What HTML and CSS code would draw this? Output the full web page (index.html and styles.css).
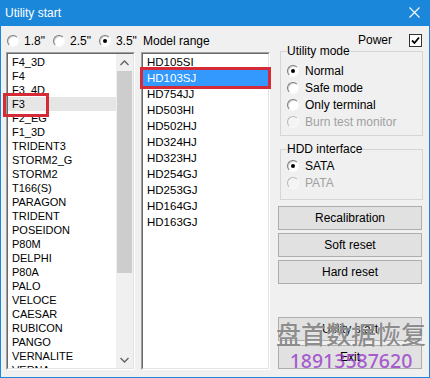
FILE: index.html
```html
<!DOCTYPE html>
<html lang="en">
<head>
    <meta charset="UTF-8">
    <title>Utility start</title>
    <link rel="stylesheet" href="styles.css">
</head>
<body>

<div class="window">
    <!-- title bar -->
    <div class="titlebar">
        <span class="title">Utility start</span>
        <svg class="close" width="11" height="11" viewBox="0 0 11 11">
            <path d="M0.5 0.5 L10.5 10.5 M10.5 0.5 L0.5 10.5" stroke="#fff" stroke-width="1.1" fill="none"/>
        </svg>
    </div>

    <div class="client">
        <!-- family list -->
        <div class="col col-family">
            <div class="sizes">
                <label class="opt"><span class="radio"></span>1.8"</label>
                <label class="opt"><span class="radio"></span>2.5"</label>
                <label class="opt"><span class="radio checked"></span>3.5"</label>
            </div>
            <div class="listbox">
                <div class="listbox-in family">
                    <div class="items">
                        <div class="item">F4_3D</div>
                        <div class="item">F4</div>
                        <div class="item">F3_4D</div>
                        <div class="item current">F3</div>
                        <div class="item">F2_EG</div>
                        <div class="item">F1_3D</div>
                        <div class="item">TRIDENT3</div>
                        <div class="item">STORM2_G</div>
                        <div class="item">STORM2</div>
                        <div class="item">T166(S)</div>
                        <div class="item">PARAGON</div>
                        <div class="item">TRIDENT</div>
                        <div class="item">POSEIDON</div>
                        <div class="item">P80M</div>
                        <div class="item">DELPHI</div>
                        <div class="item">P80A</div>
                        <div class="item">PALO</div>
                        <div class="item">VELOCE</div>
                        <div class="item">CAESAR</div>
                        <div class="item">RUBICON</div>
                        <div class="item">PANGO</div>
                        <div class="item">VERNALITE</div>
                        <div class="item">VERNA</div>
                    </div>
                    <div class="vscroll">
                        <div class="arrow">
                            <svg width="9" height="6" viewBox="0 0 9 6"><path d="M0.5 5 L4.5 1 L8.5 5" stroke="#606060" stroke-width="1.3" fill="none"/></svg>
                        </div>
                        <div class="track"><div class="thumb"></div></div>
                        <div class="arrow">
                            <svg width="9" height="6" viewBox="0 0 9 6"><path d="M0.5 1 L4.5 5 L8.5 1" stroke="#606060" stroke-width="1.3" fill="none"/></svg>
                        </div>
                    </div>
                </div>
            </div>
        </div>

        <!-- model list -->
        <div class="col col-model">
            <div class="caption">Model range</div>
            <div class="listbox">
                <div class="listbox-in models">
                    <div class="item">HD105SI</div>
                    <div class="item selected">HD103SJ</div>
                    <div class="item">HD754JJ</div>
                    <div class="item">HD503HI</div>
                    <div class="item">HD502HJ</div>
                    <div class="item">HD324HJ</div>
                    <div class="item">HD323HJ</div>
                    <div class="item">HD254GJ</div>
                    <div class="item">HD253GJ</div>
                    <div class="item">HD164GJ</div>
                    <div class="item">HD163GJ</div>
                </div>
            </div>
        </div>

        <!-- options and buttons -->
        <div class="col col-side">
            <div class="power">
                <span>Power</span>
                <span class="check">
                    <svg width="9" height="9" viewBox="0 0 9 9"><path d="M1 4.5 L3.5 7 L8 1.5" stroke="#000" stroke-width="1.8" fill="none"/></svg>
                </span>
            </div>
            <fieldset class="group mode">
                <legend>Utility mode</legend>
                <label class="opt row"><span class="radio checked"></span>Normal</label>
                <label class="opt row"><span class="radio"></span>Safe mode</label>
                <label class="opt row"><span class="radio"></span>Only terminal</label>
                <label class="opt row disabled"><span class="radio"></span>Burn test monitor</label>
            </fieldset>
            <fieldset class="group iface">
                <legend>HDD interface</legend>
                <label class="opt row"><span class="radio checked"></span>SATA</label>
                <label class="opt row disabled"><span class="radio"></span>PATA</label>
            </fieldset>
            <button class="btn first">Recalibration</button>
            <button class="btn">Soft reset</button>
            <button class="btn">Hard reset</button>
            <button class="btn start">Utility start</button>
            <button class="btn">Exit</button>
        </div>

        <!-- annotation box and watermark -->
        <div class="mark-f3"></div>
        <div class="watermark">
            <div class="wm-name">盘首数据恢复</div>
            <div class="wm-phone">18913587620</div>
        </div>
    </div>
</div>

</body>
</html>
```

FILE: styles.css
```css
* {
    box-sizing: border-box;
}
body {
    margin: 0;
    font-family: "Liberation Sans", Arial, sans-serif;
    font-size: 12px;
    color: #000;
    background: #fff;
}
.window {
    width: 430px;
    height: 378px;
    display: flex;
    flex-direction: column;
}
.titlebar {
    height: 26px;
    background-color: #1a87da;
    color: #fff;
    display: flex;
    align-items: center;
    justify-content: space-between;
    padding: 0 10px 1px 5px;
}
.titlebar .title {
    font-size: 12px;
}
.client {
    flex: 1;
    position: relative;
    display: flex;
    background-color: #f0f0f0;
    border: 1px solid #1a87da;
    border-top: 0;
    padding: 4px 7px 0 5px;
}
.col-family,
.col-model {
    width: 129px;
    display: flex;
    flex-direction: column;
}
.col-model {
    margin-left: 6px;
}
.col-side {
    width: 144px;
    margin-left: 8px;
    display: flex;
    flex-direction: column;
}

/* radios */
.opt {
    display: flex;
    align-items: center;
}
.radio {
    position: relative;
    width: 12px;
    height: 12px;
    border-radius: 50%;
    background: #fff;
    border: 1px solid;
    border-color: #7a7a7a #fafafa #fafafa #7a7a7a;
    box-shadow: inset 1px 1px 0 #d8d8d8;
    margin-right: 6px;
    flex-shrink: 0;
}
.radio.checked::after {
    content: "";
    position: absolute;
    left: 3px;
    top: 3px;
    width: 4px;
    height: 4px;
    border-radius: 50%;
    background: #000;
}
.disabled {
    color: #a0a0a0;
}
.disabled .radio {
    background: #f4f4f4;
    border-color: #b8b8b8 #fafafa #fafafa #b8b8b8;
    box-shadow: none;
}

.sizes {
    height: 22px;
    display: flex;
    align-items: center;
    padding-left: 1px;
}
.sizes .opt {
    margin-right: 8px;
}
.sizes .radio {
    margin-right: 5px;
}
.caption {
    height: 22px;
    line-height: 22px;
    padding-left: 2px;
}

/* list boxes */
.listbox {
    height: 318px;
    border: 1px solid;
    border-color: #a0a0a0 #fff #fff #a0a0a0;
}
.listbox-in {
    height: 100%;
    background: #fff;
    border: 1px solid;
    border-color: #696969 #e3e3e3 #e3e3e3 #696969;
}
.family {
    display: flex;
    overflow: hidden;
}
.family .items {
    flex: 1;
    padding-top: 1px;
    font-size: 11px;
}
.family .item {
    height: 14px;
    line-height: 14px;
    padding-left: 4px;
    white-space: nowrap;
}
.family .item.current {
    background: #e6e6e6;
}
.vscroll {
    width: 17px;
    display: flex;
    flex-direction: column;
    background: #f0f0f0;
}
.vscroll .arrow {
    height: 17px;
    display: flex;
    align-items: center;
    justify-content: center;
}
.vscroll .track {
    flex: 1;
    padding: 0 1px;
}
.vscroll .thumb {
    height: 202px;
    background: #cdcdcd;
}
.models {
    font-size: 11.5px;
}
.models .item {
    height: 16px;
    line-height: 16px;
    padding-left: 4px;
}
.models .item.selected {
    background: #3399ff;
    color: #fff;
    outline: 3px solid #d42b37;
    outline-offset: 0;
}

/* right side */
.power {
    height: 16px;
    margin-top: 2px;
    display: flex;
    justify-content: flex-end;
    align-items: center;
}
.power .check {
    width: 13px;
    height: 13px;
    margin-left: 17px;
    background: #fff;
    border: 1px solid #333;
    display: flex;
    align-items: center;
    justify-content: center;
}
.group {
    margin: 0 -1px 0 2px;
    border: 1px solid #d5d5d5;
    padding: 4px 0 5px 6px;
}
.group legend {
    padding: 0;
    line-height: 14px;
}
.group.mode {
    margin-top: -4px;
}
.group.iface {
    margin-top: 6px;
    padding-top: 1px;
    padding-bottom: 8px;
}
.opt.row {
    height: 17px;
}
.btn {
    height: 24px;
    width: 144px;
    margin-top: 3px;
    padding: 0;
    font-family: "Liberation Sans", Arial, sans-serif;
    font-size: 12px;
    color: #000;
    background: #e1e1e1;
    border: 1px solid #adadad;
}
.btn.first {
    margin-top: 6px;
}
.btn.start {
    margin-top: 33px;
}
.btn + .btn:last-child {
    margin-top: 4px;
}

/* red annotation around F3 */
.mark-f3 {
    position: absolute;
    left: 2px;
    top: 67px;
    width: 46px;
    height: 24px;
    border: 3px solid #d42b37;
}

/* watermark over the buttons */
.watermark {
    position: absolute;
    left: 274px;
    top: 292px;
    width: 152px;
    text-align: center;
    pointer-events: none;
}
.wm-name {
    font-family: "Noto Sans CJK SC", sans-serif;
    font-size: 25px;
    font-weight: 500;
    line-height: 30px;
    color: rgba(90, 90, 90, 0.7);
    text-shadow: 0 0 1px #fff;
}
.wm-phone {
    font-family: "Noto Sans", sans-serif;
    font-size: 19.5px;
    font-weight: 500;
    line-height: 22px;
    margin-top: 2px;
    color: rgba(150, 55, 200, 0.8);
}
```
